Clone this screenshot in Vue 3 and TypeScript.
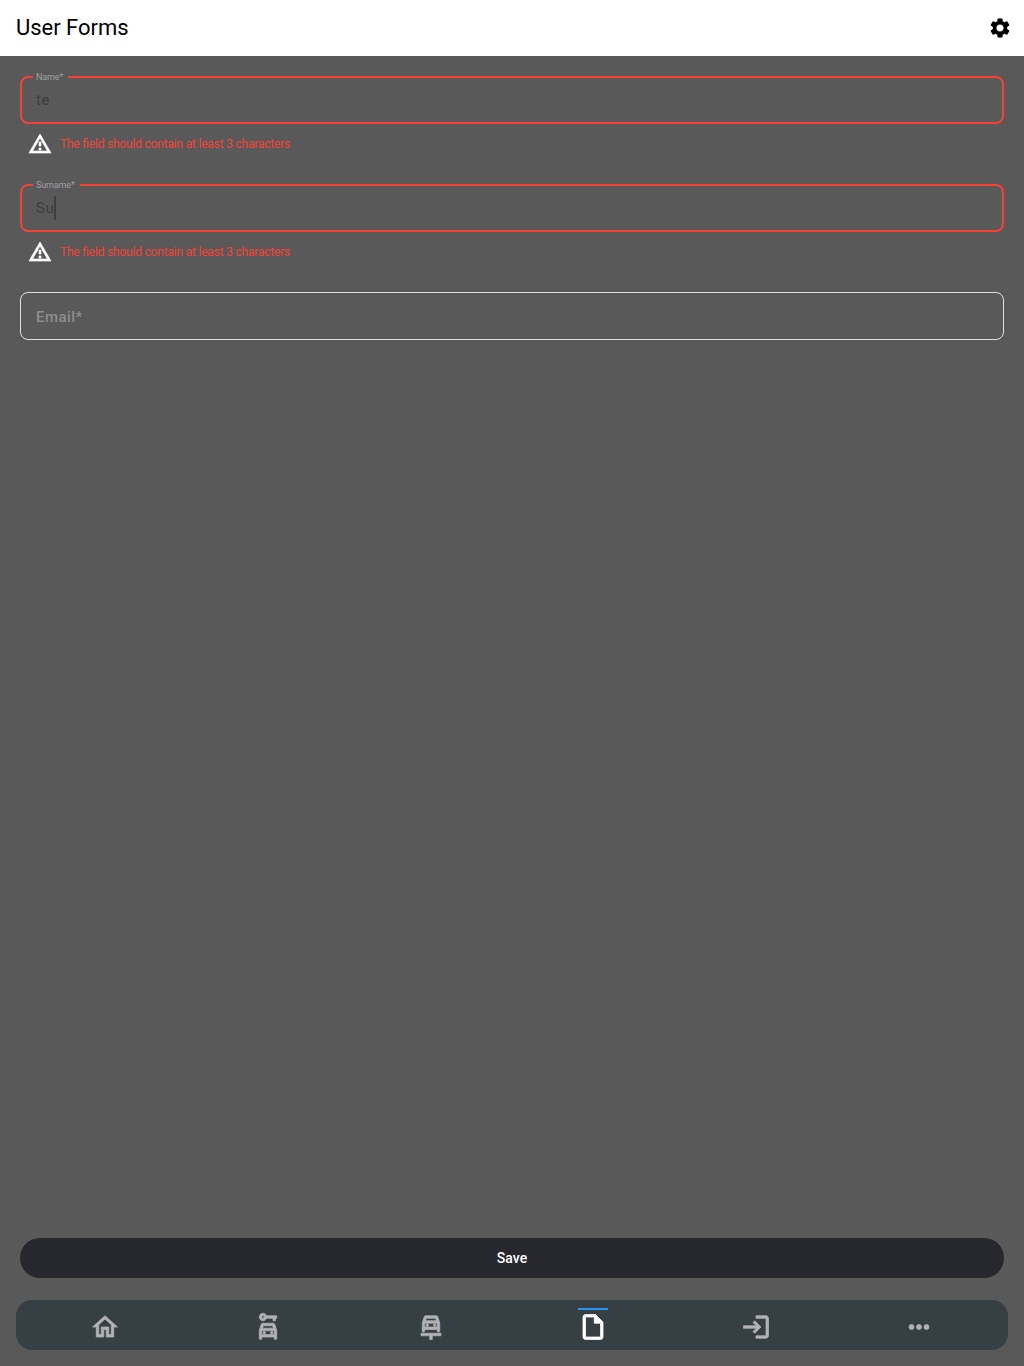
<script setup lang="ts">
import { ref } from 'vue'

interface Field {
  id: string
  label: string
  value: string
  error: string
  focused: boolean
}

interface Tab {
  name: string
  path: string
}

const tooShort = 'The field should contain at least 3 characters'

const fields = ref<Field[]>([
  { id: 'name', label: 'Name*', value: 'te', error: tooShort, focused: false },
  { id: 'surname', label: 'Surname*', value: 'Su', error: tooShort, focused: true },
  { id: 'email', label: 'Email*', value: '', error: '', focused: false },
])

const tabs: Tab[] = [
  { name: 'home', path: 'M12 5.69l5 4.5V18h-2v-6H9v6H7v-7.81l5-4.5M12 3L2 12h3v8h6v-6h2v6h6v-8h3L12 3z' },
  {
    name: 'rental',
    path: 'M16.39 9H7.61c-.43 0-.81.28-.95.68L5 14.69v6.5c0 .45.35.81.78.81h.44c.43 0 .78-.36.78-.81V20h10v1.19c0 .45.34.81.78.81h.44c.43 0 .78-.36.78-.81v-6.5l-1.66-5.01c-.14-.4-.52-.68-.95-.68zM8.33 11h7.34l.66 2H7.67l.66-2zM17 18H7v-3h10v3zM9 15.5a1 1 0 1 0 0 2 1 1 0 0 0 0-2zM15 15.5a1 1 0 1 0 0 2 1 1 0 0 0 0-2zM10.83 3C10.41 1.83 9.3 1 8 1 6.34 1 5 2.34 5 4s1.34 3 3 3c1.3 0 2.41-.84 2.83-2H16v2h2V5h1V3h-8.17zM8 5c-.55 0-1-.45-1-1s.45-1 1-1 1 .45 1 1-.45 1-1 1z',
  },
  {
    name: 'repair',
    path: 'M16.39 3H7.61c-.43 0-.81.28-.95.68L5 8.69v6.5c0 .45.35.81.78.81h.44c.43 0 .78-.36.78-.81V14h10v1.19c0 .45.34.81.78.81h.44c.43 0 .78-.36.78-.81v-6.5l-1.66-5.01c-.14-.4-.52-.68-.95-.68zM8.33 5h7.34l.66 2H7.67l.66-2zM17 12H7V9h10v3zM9 9.5a1 1 0 1 0 0 2 1 1 0 0 0 0-2zM15 9.5a1 1 0 1 0 0 2 1 1 0 0 0 0-2zM4 17.01V19h7v3h2v-3h7v-1.99H4z',
  },
  { name: 'forms', path: 'M14 2H6c-1.1 0-1.99.9-1.99 2L4 20c0 1.1.89 2 1.99 2H18c1.1 0 2-.9 2-2V8l-6-6zM6 20V4h7v5h5v11H6z' },
  {
    name: 'login',
    path: 'M11 7L9.6 8.4l2.6 2.6H2v2h10.2l-2.6 2.6L11 17l5-5-5-5zm9 12h-8v2h8c1.1 0 2-.9 2-2V5c0-1.1-.9-2-2-2h-8v2h8v14z',
  },
  {
    name: 'more',
    path: 'M6 10a2 2 0 1 0 0 4 2 2 0 0 0 0-4zm12 0a2 2 0 1 0 0 4 2 2 0 0 0 0-4zm-6 0a2 2 0 1 0 0 4 2 2 0 0 0 0-4z',
  },
]

const activeTab = ref('forms')
</script>

<template>
  <div class="page">
    <header class="bar">
      <h1>User Forms</h1>
      <svg class="gear" viewBox="0 0 24 24">
        <path d="M19.14 12.94c.04-.3.06-.61.06-.94 0-.32-.02-.64-.07-.94l2.03-1.58c.18-.14.23-.41.12-.61l-1.92-3.32c-.12-.22-.37-.29-.59-.22l-2.39.96c-.5-.38-1.03-.7-1.62-.94l-.36-2.54c-.04-.24-.24-.41-.48-.41h-3.84c-.24 0-.43.17-.47.41l-.36 2.54c-.59.24-1.13.57-1.62.94l-2.39-.96c-.22-.08-.47 0-.59.22L2.74 8.87c-.12.21-.08.47.12.61l2.03 1.58c-.05.3-.09.63-.09.94s.02.64.07.94l-2.03 1.58c-.18.14-.23.41-.12.61l1.92 3.32c.12.22.37.29.59.22l2.39-.96c.5.38 1.03.7 1.62.94l.36 2.54c.05.24.24.41.48.41h3.84c.24 0 .44-.17.47-.41l.36-2.54c.59-.24 1.13-.56 1.62-.94l2.39.96c.22.08.47 0 .59-.22l1.92-3.32c.12-.22.07-.47-.12-.61l-2.01-1.58zM12 15.6c-1.98 0-3.6-1.62-3.6-3.6s1.62-3.6 3.6-3.6 3.6 1.62 3.6 3.6-1.62 3.6-3.6 3.6z" />
      </svg>
    </header>

    <main class="form">
      <div v-for="field in fields" :key="field.id" class="group">
        <div class="field" :class="{ invalid: field.error }">
          <span v-if="field.value" class="floating">{{ field.label }}</span>
          <span v-if="field.value" class="value">{{ field.value }}</span>
          <span v-else class="placeholder">{{ field.label }}</span>
          <i v-if="field.focused" class="caret"></i>
        </div>
        <div v-if="field.error" class="message">
          <svg viewBox="0 0 24 24">
            <path d="M12 5.99L19.53 19H4.47L12 5.99M12 2L1 21h22L12 2zm1 14h-2v2h2v-2zm0-6h-2v4h2v-4z" />
          </svg>
          <span>{{ field.error }}</span>
        </div>
      </div>
    </main>

    <button class="save" type="button">Save</button>

    <nav class="tabs">
      <a v-for="tab in tabs" :key="tab.name" class="tab" :class="{ active: tab.name === activeTab }">
        <svg viewBox="0 0 24 24"><path :d="tab.path" /></svg>
      </a>
    </nav>
  </div>
</template>

<style>
body {
  margin: 0;
  background: #595959;
}
</style>

<style scoped>
.page {
  display: flex;
  flex-direction: column;
  height: 1366px;
  box-sizing: border-box;
  padding-bottom: 16px;
  background: #595959;
  font-family: Roboto, 'Liberation Sans', sans-serif;
}
.bar {
  display: flex;
  align-items: center;
  justify-content: space-between;
  height: 56px;
  padding: 0 12px 0 16px;
  background: #fff;
}
h1 {
  margin: 0;
  font-size: 22px;
  font-weight: 400;
  line-height: 28px;
  letter-spacing: -0.03px;
  color: #000;
}
.gear {
  width: 24px;
  height: 24px;
}
.form {
  flex: 1;
  padding: 20px 20px 0;
}
.group {
  margin-bottom: 28px;
}
.field {
  position: relative;
  display: flex;
  align-items: center;
  height: 48px;
  box-sizing: border-box;
  padding: 0 15px;
  border: 1px solid #e0e0e0;
  border-radius: 8px;
  font-size: 15px;
  letter-spacing: 0.5px;
}
.field.invalid {
  padding: 0 14px;
  border: 2px solid #f44336;
}
.floating {
  position: absolute;
  top: -7px;
  left: 11px;
  padding: 0 5px 0 3px;
  background: #595959;
  color: #a0a0a3;
  font-size: 9px;
  line-height: 12px;
  letter-spacing: -0.14px;
}
.value {
  color: #3d3d3d;
}
.placeholder {
  padding-top: 2px;
  color: #8e8e90;
  font-weight: 500;
  letter-spacing: 0.45px;
}
.caret {
  width: 2px;
  height: 24px;
  background: #3d3d3d;
}
.message {
  display: flex;
  align-items: center;
  gap: 8px;
  height: 24px;
  padding: 8px 8px 0;
  color: #f44336;
  font-size: 12px;
  letter-spacing: -0.2px;
  font-feature-settings: 'liga' 1;
}
.message svg {
  width: 24px;
  height: 24px;
  fill: #fff;
  stroke: #fff;
  stroke-width: 0.7px;
}
.save {
  height: 40px;
  margin: 0 20px 22px;
  border: 0;
  border-radius: 20px;
  background: #27282d;
  color: #fff;
  font-family: inherit;
  font-size: 14px;
  font-weight: 500;
}
.tabs {
  display: flex;
  height: 50px;
  margin: 0 16px;
  box-sizing: border-box;
  padding: 0 8px;
  border-radius: 16px;
  background: #363f44;
}
.tab {
  display: flex;
  flex: 1;
  flex-direction: column;
  align-items: center;
  padding-top: 8px;
}
.tab::before {
  content: '';
  width: 30px;
  height: 2px;
  margin-bottom: 2px;
}
.tab.active::before {
  background: #2196f3;
}
.tab svg {
  width: 30px;
  height: 30px;
  fill: #b0b2b4;
  stroke: #b0b2b4;
  stroke-width: 0.6px;
}
.tab.active svg {
  fill: #fff;
  stroke: #fff;
}
</style>
